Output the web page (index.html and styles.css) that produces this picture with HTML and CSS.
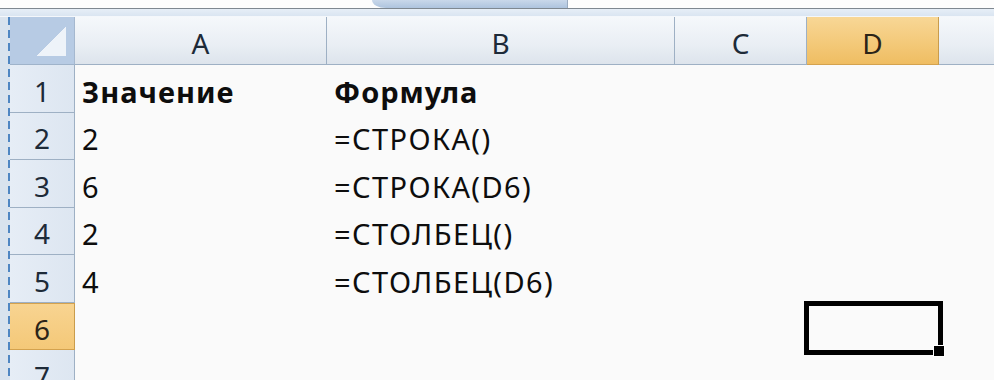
FILE: index.html
```html
<!DOCTYPE html>
<html lang="ru">
<head>
<meta charset="utf-8">
<link rel="stylesheet" href="styles.css">
</head>
<body>
<div class="top">
  <div class="tab"></div>
</div>
<div class="rule"></div>
<div class="band"></div>
<div class="main">
  <div class="strip"></div>
  <div class="sheet">
    <div class="corner"><div class="tri"></div></div>
    <div class="ch">A</div>
    <div class="ch">B</div>
    <div class="ch">C</div>
    <div class="ch sel">D</div>
    <div class="ch last"></div>

    <div class="rh">1</div>
    <div class="cell b">Значение</div>
    <div class="cell b">Формула</div>
    <div class="cell"></div><div class="cell"></div><div class="cell"></div>

    <div class="rh">2</div>
    <div class="cell">2</div>
    <div class="cell">=СТРОКА()</div>
    <div class="cell"></div><div class="cell"></div><div class="cell"></div>

    <div class="rh">3</div>
    <div class="cell">6</div>
    <div class="cell">=СТРОКА(D6)</div>
    <div class="cell"></div><div class="cell"></div><div class="cell"></div>

    <div class="rh">4</div>
    <div class="cell">2</div>
    <div class="cell">=СТОЛБЕЦ()</div>
    <div class="cell"></div><div class="cell"></div><div class="cell"></div>

    <div class="rh">5</div>
    <div class="cell">4</div>
    <div class="cell">=СТОЛБЕЦ(D6)</div>
    <div class="cell"></div><div class="cell"></div><div class="cell"></div>

    <div class="rh sel">6</div>
    <div class="cell"></div>
    <div class="cell"></div>
    <div class="cell"></div>
    <div class="cell active"><div class="cursor"><div class="handle"></div></div></div>
    <div class="cell"></div>

    <div class="rh">7</div>
    <div class="cell"></div><div class="cell"></div><div class="cell"></div><div class="cell"></div><div class="cell"></div>
  </div>
</div>
</body>
</html>
```

FILE: styles.css
```css
html, body {
  margin: 0;
  padding: 0;
}
body {
  width: 994px;
  height: 380px;
  overflow: hidden;
  background: #fafafa;
  font-family: "Noto Sans", "Open Sans", sans-serif;
  color: #111;
}
.top {
  height: 8px;
  background: #fdfdfd;
  display: flex;
  padding-left: 372px;
}
.tab {
  width: 195px;
  height: 8px;
  background: linear-gradient(#c9d8ea, #aec4de);
  border-bottom-left-radius: 14px 8px;
  border-right: 1px solid #9aabc0;
}
.rule {
  height: 1px;
  background: #7f8891;
}
.band {
  height: 7px;
  background: linear-gradient(#e6eef7, #dae5f1);
  border-bottom: 1px solid #f4f7fb;
}
.main {
  display: flex;
  height: 363px;
}
.strip {
  width: 8px;
  flex: none;
  background: #d9e3ee;
  border-right: 2px solid #4f86c2;
  border-image: repeating-linear-gradient(#4f86c2 0 8px, transparent 8px 13px) 0 2 0 0 / 0 2px 0 0;
}
.sheet {
  display: grid;
  grid-template-columns: 65px 252px 348px 132px 132px 1fr;
  grid-template-rows: 48px repeat(7, 47.5px);
  flex: 1;
}
.corner {
  background: #b7cbe4;
  border-right: 1px solid #a5b8cf;
  border-bottom: 1px solid #9fb3ca;
  display: flex;
  justify-content: flex-end;
  align-items: flex-end;
  padding: 0 8px 8px 0;
}
.tri {
  width: 30px;
  height: 29px;
  background: linear-gradient(to bottom right, transparent 50%, #eef3f9 50%);
}
.ch {
  background: linear-gradient(#f5f8fb, #e9eef4 60%, #dde4ec);
  border-right: 1px solid #9eb0c4;
  border-bottom: 1px solid #9eb0c4;
  display: flex;
  align-items: center;
  justify-content: center;
  font-size: 28px;
  color: #1d2a38;
  padding-top: 4px;
  box-sizing: border-box;
}
.ch.sel {
  background: linear-gradient(#f8d796, #f3c877 60%, #efbd62);
  border-right-color: #c99c4c;
  border-bottom-color: #d4a24e;
  color: #2b2418;
}
.ch.last {
  border-right: none;
}
.rh {
  background: linear-gradient(to right, #e6edf6, #dde6f1);
  border-right: 1px solid #9eb0c4;
  border-bottom: 1px solid #9eb0c4;
  display: flex;
  align-items: center;
  justify-content: center;
  font-size: 28px;
  color: #1d2a38;
  padding-top: 5px;
  box-sizing: border-box;
}
.rh.sel {
  background: linear-gradient(#f8d491, #f4c878);
  border-right-color: #c99c4c;
  border-bottom-color: #d4a24e;
  border-top: 1px solid #d4a24e;
  color: #2b2418;
}
.cell {
  display: flex;
  align-items: center;
  padding-left: 7px;
  padding-top: 5px;
  font-size: 29px;
  letter-spacing: 1.4px;
  white-space: nowrap;
  color: #0d0d0d;
  box-sizing: border-box;
}
.cell.b {
  font-weight: 700;
  letter-spacing: 1px;
}
.active {
  position: relative;
}
.cursor {
  position: absolute;
  left: -3px;
  top: -2px;
  width: 129px;
  height: 44px;
  border: 5px solid #000;
}
.handle {
  position: absolute;
  right: -7px;
  bottom: -7px;
  width: 10px;
  height: 10px;
  background: #000;
  border: 1px solid #fff;
}
```
